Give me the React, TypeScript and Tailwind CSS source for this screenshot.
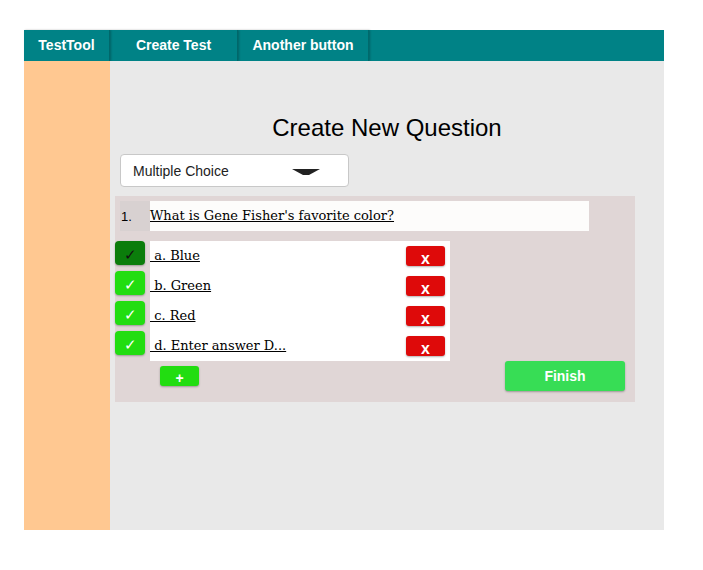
import { useState } from 'react';

const answers = ['a. Blue', 'b. Green', 'c. Red', 'd. Enter answer D...'];

const NavButton = ({ label, width }: { label: string; width: string }) => (
    <button className={`${width} h-full border-r border-[#00696c] shadow-[1px_0_2px_rgba(0,0,0,0.25)] text-white font-bold text-[14px]`}>
        {label}
    </button>
);

export default function App() {
    const [correct] = useState(0);

    return (
        <div className="pt-[30px] pl-[24px] font-['Liberation_Sans',Arial,sans-serif]">
            <div className="w-[640px] h-[500px] flex flex-col">
                <nav className="h-[31px] bg-[#008286] flex">
                    <NavButton label="TestTool" width="w-[86px]" />
                    <NavButton label="Create Test" width="w-[128px]" />
                    <NavButton label="Another button" width="w-[131px]" />
                </nav>
                <div className="flex flex-1">
                    <aside className="w-[86px] bg-[#ffc891]" />
                    <main className="flex-1 bg-[#e9e9e9] pt-[53px]">
                        <h1 className="text-center text-[24px] leading-[28px] text-black">Create New Question</h1>
                        <div className="ml-[10px] mt-[12px] w-[229px] h-[33px] bg-white border border-[#c8c8c8] rounded-[4px] flex items-center justify-between pl-[12px] pr-[28px]">
                            <span className="text-[14px] text-[#222] pt-[2px]">Multiple Choice</span>
                            <svg width="28" height="7" viewBox="0 0 28 7" className="mt-[3px]">
                                <path d="M0 0 L28 0 L17 6 L11 6 Z" fill="#222" />
                            </svg>
                        </div>
                        <section className="ml-[5px] mt-[9px] w-[520px] h-[206px] bg-[#e0d6d6] pt-[5px]">
                            <div className="flex h-[30px]">
                                <div className="ml-[5px] w-[30px] bg-[#d8d1d1] text-[13px] pt-[6px] pl-[1px]">1.</div>
                                <div className="w-[439px] bg-[#fdfcfb] pt-[5px] font-['DejaVu_Serif',serif] text-[13px] underline">
                                    What is Gene Fisher's favorite color?
                                </div>
                            </div>
                            <div className="mt-[10px] flex flex-col">
                                {answers.map((a, i) => (
                                    <div key={a} className="flex h-[30px]">
                                        <div
                                            className={`w-[30px] h-[24px] rounded-[4px] shadow-[0_1px_2px_rgba(0,0,0,0.3)] flex items-center justify-center pt-[4px] text-[15px] ${
                                                i === correct ? 'bg-[#0b7d0b] text-[#111]' : 'bg-[#22dd11] text-white'
                                            }`}
                                        >
                                            ✓
                                        </div>
                                        <div className="ml-[5px] w-[300px] bg-white flex justify-between pr-[5px]">
                                            <span className="pt-[5px] font-['DejaVu_Serif',serif] text-[13px] underline whitespace-pre">{' ' + a}</span>
                                            <button className="mt-[5px] w-[39px] h-[20px] bg-[#de0a0a] rounded-[3px] shadow-[0_1px_2px_rgba(0,0,0,0.3)] text-white font-bold text-[16px] leading-[26px] overflow-hidden">
                                                x
                                            </button>
                                        </div>
                                    </div>
                                ))}
                            </div>
                            <div className="flex justify-between items-start pl-[45px] pr-[10px]">
                                <button className="mt-[5px] w-[39px] h-[20px] bg-[#22dd11] rounded-[3px] shadow-[0_1px_2px_rgba(0,0,0,0.3)] text-white font-bold text-[14px] leading-[24px] overflow-hidden">
                                    +
                                </button>
                                <button className="w-[120px] h-[30px] bg-[#37dd55] rounded-[3px] shadow-[0_1px_2px_rgba(0,0,0,0.3)] text-white font-bold text-[14px]">
                                    Finish
                                </button>
                            </div>
                        </section>
                    </main>
                </div>
            </div>
        </div>
    );
}
